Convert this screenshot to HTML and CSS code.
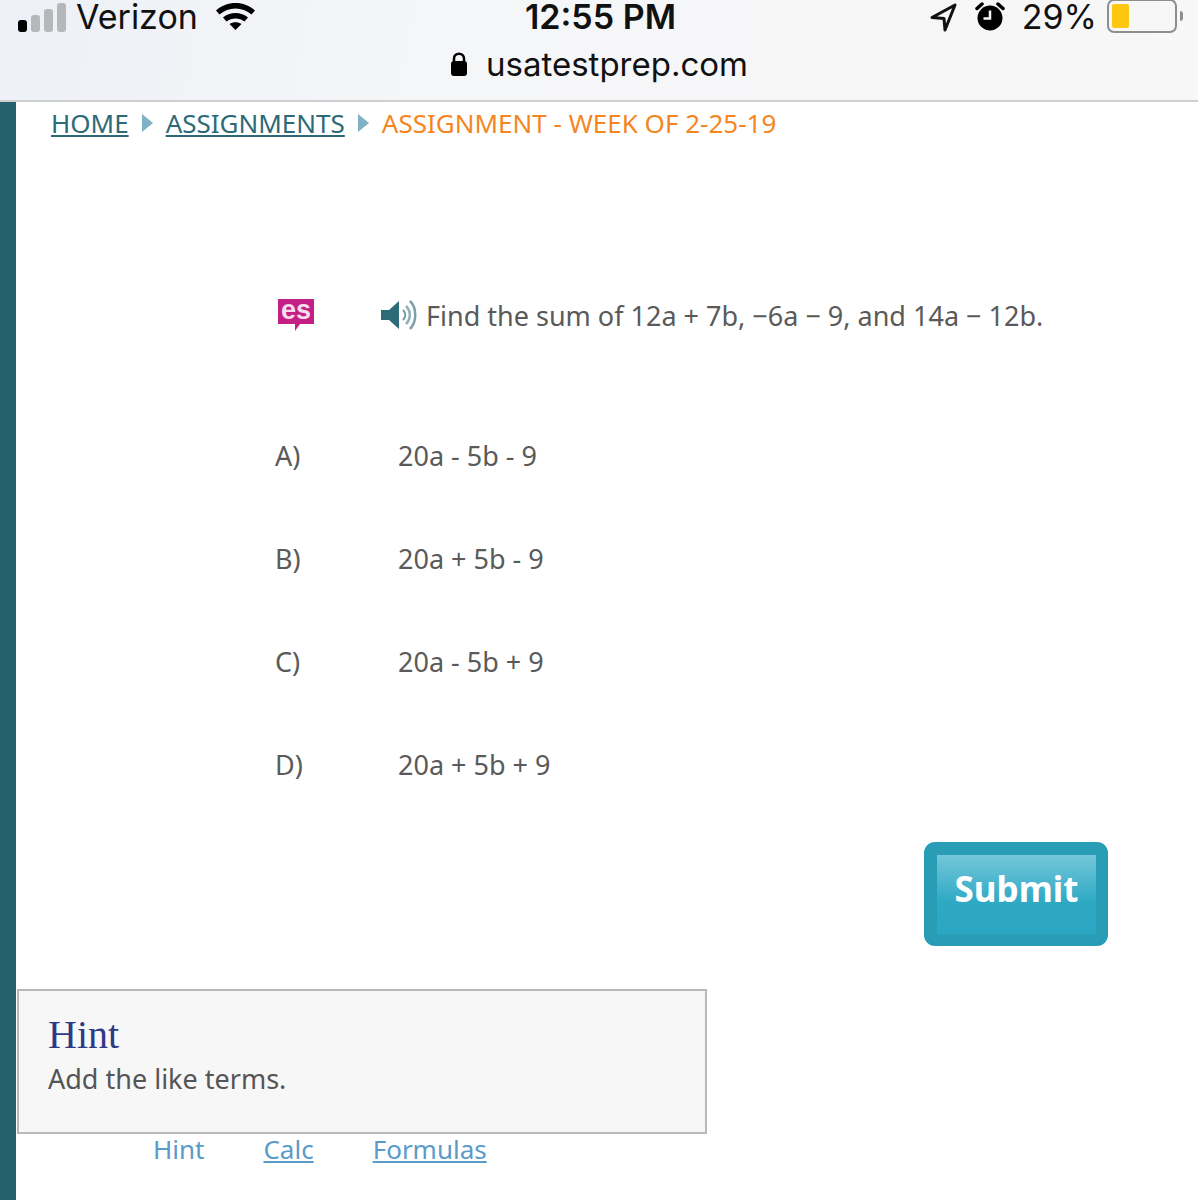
FILE: index.html
```html
<!DOCTYPE html>
<html lang="en">
<head>
    <meta charset="UTF-8">
    <meta name="viewport" content="width=device-width, initial-scale=1.0">
    <title>Assignment - Week of 2-25-19</title>
    <link rel="stylesheet" href="styles.css">
</head>
<body>
    <header class="phone-bar">
        <div class="status-row">
            <div class="status-left">
                <div class="signal">
                    <span class="bar bar-on bar-1"></span>
                    <span class="bar bar-2"></span>
                    <span class="bar bar-3"></span>
                    <span class="bar bar-4"></span>
                </div>
                <span class="carrier">Verizon</span>
                <svg class="wifi" width="42" height="30" viewBox="0 0 42 30">
                    <path d="M1 10.5C11.500 0.500 29.500 0.500 40 10.500L36.500 14.500C27.500 6.500 13.500 6.500 4.500 14.500Z"/>
                    <path d="M8 17.500C14.500 11.500 26.500 11.500 33 17.500L29.500 21.500C24.500 17.500 16.500 17.500 11.500 21.500Z"/>
                    <path d="M14.500 24C18 21.500 23 21.500 26.500 24L20.500 30Z"/>
                </svg>
            </div>
            <div class="clock">12:55 PM</div>
            <div class="status-right">
                <svg class="locate" width="28" height="30" viewBox="0 0 28 30">
                    <path d="M26 3L3 15.500L15 16.500L16 28Z" fill="none" stroke="#111" stroke-width="3" stroke-linejoin="round"/>
                </svg>
                <svg class="alarm" width="30" height="30" viewBox="0 0 30 30">
                    <circle cx="15" cy="16" r="12.500" fill="#000"/>
                    <path d="M15 8.500V16.500H8.500" fill="none" stroke="#f7f7f7" stroke-width="2.500"/>
                    <path d="M2 6.500L7 2M28 6.500L23 2" stroke="#000" stroke-width="3.500" stroke-linecap="round"/>
                </svg>
                <span class="percent">29%</span>
                <div class="battery">
                    <div class="battery-shell"><span class="battery-fill"></span></div>
                    <span class="battery-tip"></span>
                </div>
            </div>
        </div>
        <div class="url-row">
            <svg class="lock" width="18" height="26" viewBox="0 0 18 26">
                <path d="M4 12V7.500C4 1 14 1 14 7.500V12" fill="none" stroke="#000" stroke-width="2.500"/>
                <rect x="1" y="10" width="16" height="15" rx="3" fill="#000"/>
            </svg>
            <span class="url">usatestprep.com</span>
        </div>
    </header>

    <div class="page">
        <div class="rail"></div>
        <main class="content">
            <nav class="crumbs">
                <a href="#">HOME</a>
                <span class="crumb-arrow"></span>
                <a href="#">ASSIGNMENTS</a>
                <span class="crumb-arrow"></span>
                <span class="crumb-current">ASSIGNMENT - WEEK OF 2-25-19</span>
            </nav>

            <section class="question">
                <div class="question-row">
                    <svg class="es-icon" width="40" height="36" viewBox="0 0 40 36">
                        <path d="M2 2H38V27H24L19 34L19 27H2Z" fill="#c41f85"/>
                        <text x="20" y="22" text-anchor="middle" class="es-text">es</text>
                    </svg>
                    <svg class="speaker" width="38" height="32" viewBox="0 0 38 32">
                        <path d="M0 11H8L18 2V30L8 21H0Z" fill="#2e6b78"/>
                        <path d="M22 11C25 14 25 18 22 21" fill="none" stroke="#6f9aa3" stroke-width="2"/>
                        <path d="M25 7C30 12 30 20 25 25" fill="none" stroke="#8fb0b7" stroke-width="2.500"/>
                        <path d="M29 2C36 9 36 23 29 30" fill="none" stroke="#7c9fa8" stroke-width="2.500"/>
                    </svg>
                    <p class="question-text">Find the sum of 12a + 7b, −6a − 9, and 14a − 12b.</p>
                </div>

                <div class="option"><span class="option-letter">A)</span><span>20a - 5b - 9</span></div>
                <div class="option"><span class="option-letter">B)</span><span>20a + 5b - 9</span></div>
                <div class="option"><span class="option-letter">C)</span><span>20a - 5b + 9</span></div>
                <div class="option"><span class="option-letter">D)</span><span>20a + 5b + 9</span></div>
            </section>

            <div class="submit-row">
                <button type="button" class="submit-btn"><span class="submit-face">Submit</span></button>
            </div>

            <aside class="hint-box">
                <h2>Hint</h2>
                <p>Add the like terms.</p>
            </aside>

            <div class="tools">
                <a href="#" class="tool-plain">Hint</a>
                <a href="#">Calc</a>
                <a href="#">Formulas</a>
            </div>
        </main>
    </div>
</body>
</html>
```

FILE: styles.css
```css
html, body {
    margin: 0;
    padding: 0;
}

body {
    height: 1200px;
    overflow: hidden;
    background-color: #fff;
    font-family: "Noto Sans", "Open Sans", sans-serif;
    color: #555;
}

a {
    color: inherit;
}

/* phone status + address bar */
.phone-bar {
    height: 100px;
    border-bottom: 2px solid #cfcfcf;
    background: linear-gradient(100deg, #edf0f6 0%, #f5f6f8 35%, #f7f7f7 100%);
    font-family: Inter, "Liberation Sans", sans-serif;
    color: #111;
    overflow: hidden;
}

.status-row {
    display: grid;
    grid-template-columns: 1fr 1fr 1fr;
    align-items: center;
    height: 34px;
    padding: 0 15px 0 18px;
}

.status-left,
.status-right {
    display: flex;
    align-items: center;
}

.status-right {
    justify-content: flex-end;
}

.signal {
    display: flex;
    align-items: flex-end;
    gap: 4px;
    height: 30px;
    margin-right: 10px;
}

.bar {
    width: 9px;
    border-radius: 3px;
    background-color: #b4b8bb;
}

.bar-on {
    background-color: #000;
}

.bar-1 { height: 12px; }
.bar-2 { height: 17px; }
.bar-3 { height: 23px; }
.bar-4 { height: 29px; }

.carrier {
    font-size: 34px;
    line-height: 34px;
}

.wifi {
    margin-left: 17px;
    margin-top: -4px;
}

.clock {
    font-size: 34px;
    line-height: 34px;
    font-weight: 600;
    text-align: center;
}

.locate {
    margin-right: 18px;
}

.alarm {
    margin-right: 17px;
}

.percent {
    font-size: 34px;
    line-height: 34px;
    margin-right: 10px;
}

.battery {
    display: flex;
    align-items: center;
    margin-top: -2px;
}

.battery-shell {
    width: 60px;
    height: 24px;
    padding: 3px;
    border: 2px solid #8e8e8e;
    border-radius: 7px;
}

.battery-fill {
    display: block;
    width: 17px;
    height: 24px;
    border-radius: 2px;
    background-color: #fcc70c;
}

.battery-tip {
    width: 3px;
    height: 10px;
    margin-left: 3px;
    border-radius: 0 3px 3px 0;
    background-color: #8e8e8e;
}

.url-row {
    display: flex;
    justify-content: center;
    align-items: center;
    gap: 18px;
    height: 60px;
}

.url {
    font-size: 33px;
}

/* page */
.page {
    display: flex;
    height: 1098px;
}

.rail {
    flex: 0 0 16px;
    background-color: #25606e;
}

.content {
    flex: 1;
    min-width: 0;
}

.crumbs {
    display: flex;
    align-items: center;
    gap: 13px;
    height: 42px;
    padding-left: 35px;
    font-size: 26px;
    color: #2c6a77;
}

.crumb-arrow {
    width: 0;
    height: 0;
    border-left: 11px solid #7fb2c4;
    border-top: 9px solid transparent;
    border-bottom: 9px solid transparent;
}

.crumb-current {
    color: #f5861f;
}

.question {
    padding: 146px 0 0 259px;
    font-size: 27px;
    color: #5a5a5a;
}

.question-row {
    display: flex;
    align-items: center;
    height: 50px;
    margin-bottom: 64px;
}

.es-icon {
    margin-left: 1px;
    margin-right: 65px;
}

.es-text {
    font-family: "Liberation Sans", sans-serif;
    font-size: 27px;
    font-weight: bold;
    fill: #f6dcec;
}

.speaker {
    margin-right: 7px;
}

.question-text {
    margin: 0;
    white-space: nowrap;
}

.option {
    display: grid;
    grid-template-columns: 123px 1fr;
    align-items: center;
    height: 103px;
}

.submit-row {
    display: flex;
    justify-content: flex-end;
    margin-top: 26px;
    padding-right: 90px;
}

.submit-btn {
    width: 184px;
    height: 104px;
    padding: 13px 12px 12px 13px;
    border: none;
    border-radius: 11px;
    background-color: #2a9db6;
    cursor: pointer;
}

.submit-face {
    display: block;
    height: 100%;
    padding-top: 12px;
    box-sizing: border-box;
    background: linear-gradient(#74c7da, #2ea9c4 60%, #2ba7c3);
    color: #fff;
    font-family: "Noto Sans", sans-serif;
    font-size: 35px;
    font-weight: bold;
    line-height: 44px;
    text-align: center;
}

.hint-box {
    box-sizing: border-box;
    width: 690px;
    height: 145px;
    margin-top: 43px;
    margin-left: 1px;
    padding: 22px 29px;
    border: 2px solid #b8b8b8;
    background-color: #f7f7f7;
}

.hint-box h2 {
    margin: 0;
    font-family: "Liberation Serif", serif;
    font-size: 40px;
    font-weight: normal;
    line-height: 44px;
    color: #2f3a87;
}

.hint-box p {
    margin: 0;
    font-size: 27px;
    line-height: 44px;
}

.tools {
    display: flex;
    gap: 59px;
    padding-left: 137px;
    font-size: 26px;
    line-height: 30px;
    color: #5b9bc9;
}

.tool-plain {
    text-decoration: none;
}
```
